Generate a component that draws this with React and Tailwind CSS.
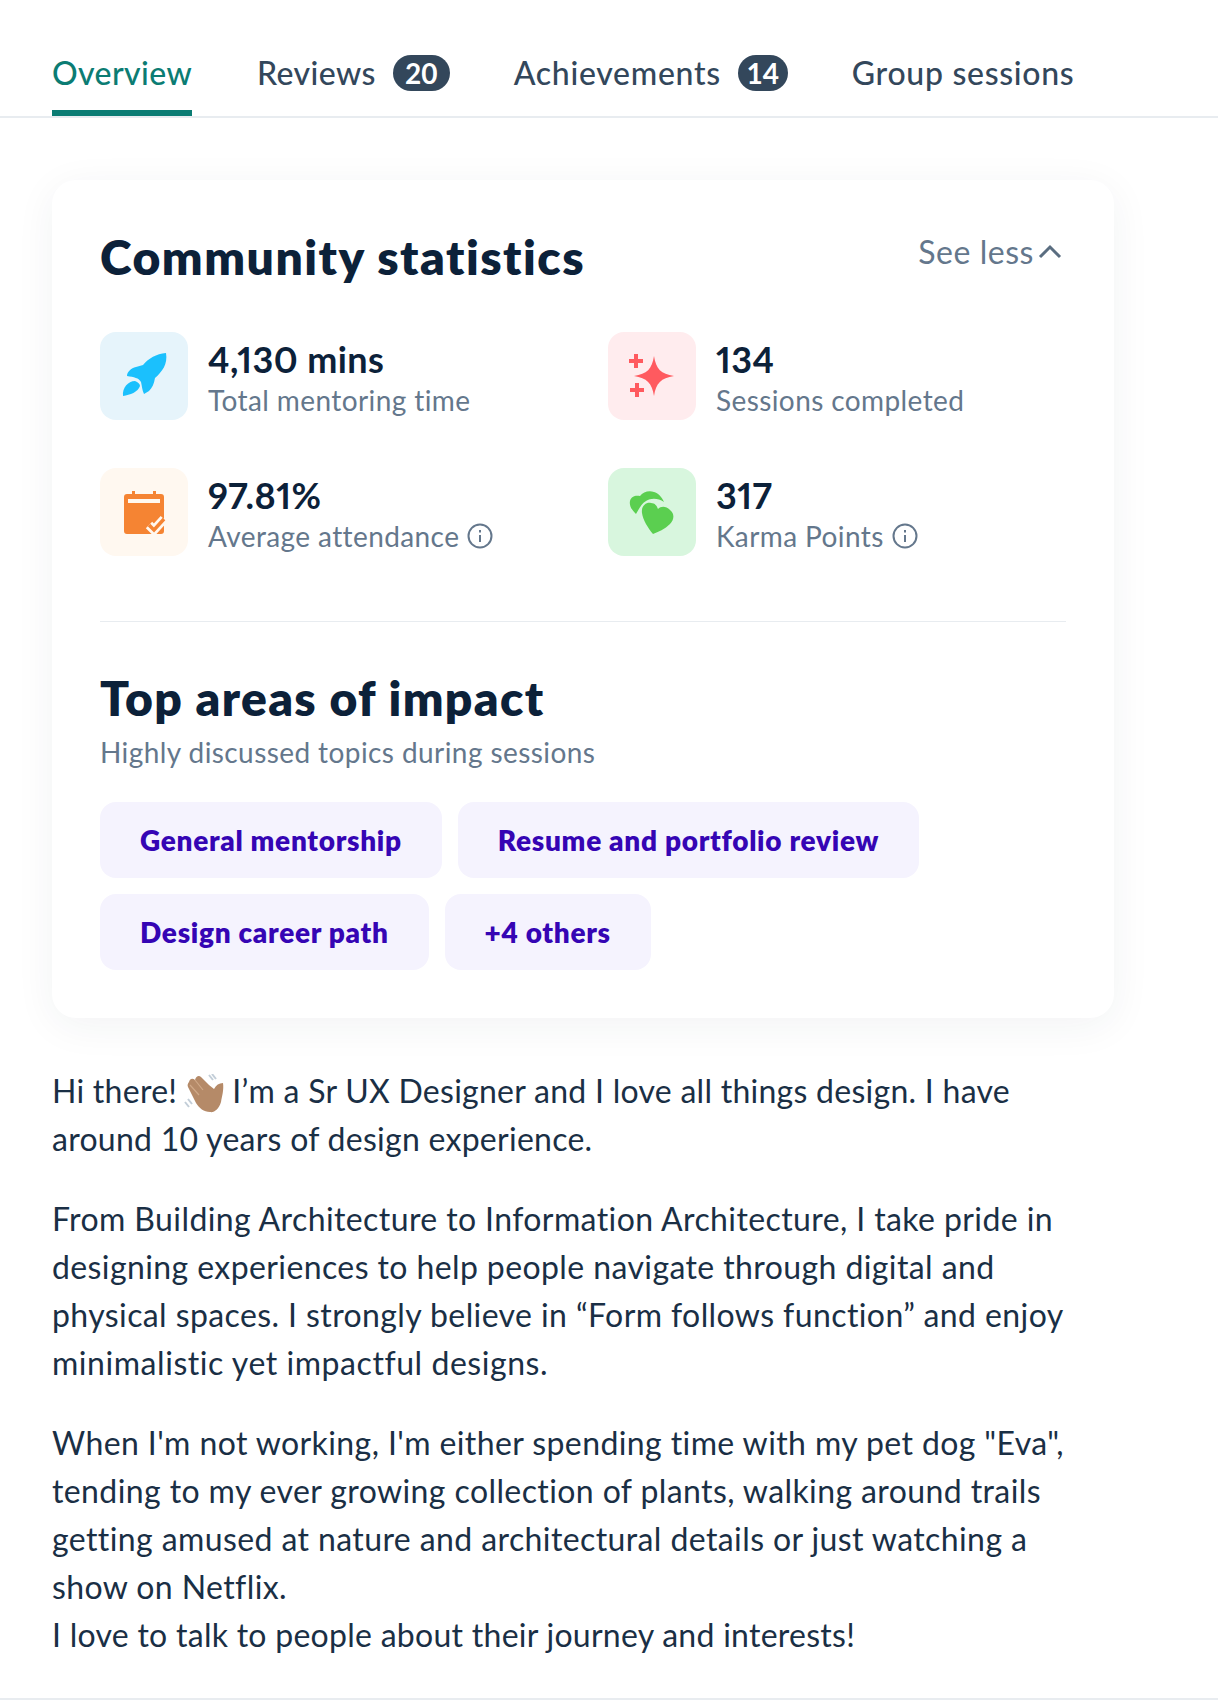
const stats = [
  { value: '4,130 mins', label: 'Total mentoring time', bg: 'bg-[#e6f4fb]', icon: 'rocket' },
  { value: '134', label: 'Sessions completed', bg: 'bg-[#ffecee]', icon: 'sparkle' },
  { value: '97.81%', label: 'Average attendance', bg: 'bg-[#fff8f0]', icon: 'calendar', info: true },
  { value: '317', label: 'Karma Points', bg: 'bg-[#d8f6de]', icon: 'hearts', info: true },
];

// icons are drawn in the coordinates of their 88px box
function StatIcon({ name }) {
  if (name === 'rocket') {
    return (
      <svg width="88" height="88" viewBox="0 0 88 88" fill="#1bc0fd">
        <path d="M66 21C68 32 62 40 55 46C54 52 52 56 49 59L44 62C42 58 42 54 41 50C39 46 34 45 27 44C27 40 31 36 36 35L43 33C49 26 56 22 66 21Z" />
        <path d="M23 64C22 56 28 49 35 49C38 50 40 52 40 54C38 60 30 63 23 64Z" />
      </svg>
    );
  }
  if (name === 'sparkle') {
    return (
      <svg width="88" height="88" viewBox="0 0 88 88" fill="#ff5a5f">
        <path d="M46 24C48 37 53 42 66 44C53 46 48 51 46 64C44 51 39 46 26 44C39 42 44 37 46 24Z" />
        <path d="M26 22h4v5h5v4h-5v5h-4v-5h-5v-4h5zM27 51h4v5h5v4h-5v5h-4v-5h-5v-4h5z" />
      </svg>
    );
  }
  if (name === 'calendar') {
    return (
      <svg width="88" height="88" viewBox="0 0 88 88">
        <path fill="#f58433" d="M32 23h3v3h18v-3h3v3h5c2 0 3 1 3 3v34c0 2-1 3-3 3H27c-2 0-3-1-3-3V29c0-2 1-3 3-3h5z" />
        <rect x="28" y="31" width="32" height="4" fill="#fff8f0" />
        <path d="M49 57l5 5 10-11" fill="none" stroke="#fff8f0" strokeWidth="9" />
        <path d="M49 57l5 5 10-11" fill="none" stroke="#f58433" strokeWidth="3.5" />
      </svg>
    );
  }
  return (
    <svg width="88" height="88" viewBox="0 0 88 88" fill="#5bcf50">
      <path d="M28 46C24 42 21 38 22 33C23 28 28 27 32 28C35 24 41 22 46 24C50 25 54 29 56 34C50 30 43 30 38 33C33 36 31 41 28 46Z" />
      <path d="M45 66C40 60 35 52 34 45C33 38 38 34 43 35C47 35 49 38 50 41C53 38 58 38 62 42C67 46 66 52 62 56C57 61 50 64 45 66Z" />
    </svg>
  );
}

function InfoIcon() {
  return (
    <svg width="26" height="26" viewBox="0 0 26 26" fill="none" stroke="#64778c" strokeWidth="2" className="shrink-0">
      <circle cx="13" cy="13" r="11.5" />
      <path d="M13 12v7" />
      <path d="M13 7v2.4" />
    </svg>
  );
}

function WaveEmoji() {
  return (
    <svg width="42" height="40" viewBox="0 0 42 40" className="inline-block align-[-11px] mx-[-2px]">
      <path d="M1 28l4 5M4 25l4 5M25 1l4 5M28 0l4 5" stroke="#c3ced8" strokeWidth="2" fill="none" />
      <path fill="#b58a68" d="M5 8C6 4 9 4 11 6C12 2 15 1 17 3L25 11L30 15C32 11 35 9 39 9C40 16 38 22 37 28C35 35 30 39 26 38C20 38 15 34 12 29L4 13C3 11 4 9 5 8Z" />
      <path d="M11 6l8 10M6 11l9 10" stroke="#d0a988" strokeWidth="1.2" fill="none" />
    </svg>
  );
}

export default function App() {
  return (
    <div className="w-[1218px] h-[1706px] bg-white font-['Lato','Liberation_Sans',sans-serif] text-[#1a2f45]">
      <div className="pt-[49px] border-b-2 border-[#e8ecf0] h-[118px] pl-[52px] flex gap-[64px] text-[32px] tracking-[0.4px] text-[#33475b] font-medium">
        <div className="h-[67px] border-b-[6px] border-[#0b7c73] text-[#0b7c73] leading-[48px] mr-px">Overview</div>
        <div className="flex gap-[17px] leading-[48px]">
          Reviews
          <span className="h-[36px] mt-[6px] w-[57px] rounded-full bg-[#33475b] text-white text-[28px] font-bold tracking-normal leading-[36px] text-center">20</span>
        </div>
        <div className="flex gap-[17px] leading-[48px] tracking-[0.7px]">
          Achievements
          <span className="h-[36px] mt-[6px] w-[50px] rounded-full bg-[#33475b] text-white text-[28px] font-bold tracking-normal leading-[36px] text-center">14</span>
        </div>
        <div className="leading-[48px] tracking-[0.7px]">Group sessions</div>
      </div>

      <div className="mt-[62px] ml-[52px] w-[1062px] h-[838px] rounded-[24px] bg-white p-12 shadow-[0_8px_40px_rgba(30,50,70,0.06)]">
        <div className="flex justify-between items-start h-[56px]">
          <h2 className="text-[48px] leading-[56px] font-extrabold tracking-[1.5px] text-[#0c2139] pt-px">Community statistics</h2>
          <div className="flex items-center gap-1 text-[32px] tracking-[0.55px] leading-[40px] text-[#64778c] mr-[4px] mt-[4px]">
            See less
            <svg width="24" height="24" viewBox="0 0 24 24" fill="none" stroke="#5a6d80" strokeWidth="3"><path d="M2 17L12 7l10 10" /></svg>
          </div>
        </div>

        <div className="mt-12 grid grid-cols-[508px_1fr] gap-y-12">
          {stats.map((s) => (
            <div key={s.label} className="flex gap-5 h-[88px]">
              <div className={`w-[88px] h-[88px] rounded-2xl flex items-center justify-center ${s.bg}`}>
                <StatIcon name={s.icon} />
              </div>
              <div className="pt-[5px]">
                <div className="text-[36px] leading-[44px] font-bold tracking-[0.4px] proportional-nums text-[#0c2139]">{s.value}</div>
                <div className="mt-px flex items-center gap-2 text-[28px] tracking-[0.4px] leading-[36px] text-[#64778c]">
                  {s.label}
                  {s.info && <InfoIcon />}
                </div>
              </div>
            </div>
          ))}
        </div>

        <div className="mt-[65px] border-t border-[#e8ecf0] pt-12">
          <h2 className="text-[48px] leading-[56px] font-extrabold tracking-[1.35px] text-[#0c2139]">Top areas of impact</h2>
          <p className="mt-[6px] text-[28px] tracking-[0.42px] leading-[40px] text-[#64778c]">Highly discussed topics during sessions</p>
          <div className="mt-[30px] flex flex-wrap gap-4 w-[900px]">
            {['General mentorship', 'Resume and portfolio review', 'Design career path', '+4 others'].map((c) => (
              <span key={c} className="h-[76px] px-10 rounded-2xl bg-[#f5f3fe] text-[#3505b4] text-[28px] font-extrabold tracking-[0.7px] leading-[76px]">{c}</span>
            ))}
          </div>
        </div>
      </div>

      <div className="mt-[49px] mx-[52px] w-[1080px] text-[32px] tracking-[0.4px] leading-[48px] text-[#1a2f45] flex flex-col gap-8">
        <p className="tracking-[0.27px]">Hi there! <WaveEmoji /> I’m a Sr UX Designer and I love all things design. I have<br />around 10 years of design experience.</p>
        <p>From Building Architecture to Information Architecture, I take pride in<br />designing experiences to help people navigate through digital and<br />physical spaces. I strongly believe in “Form follows function” and enjoy<br /><span className="tracking-[0.55px]">minimalistic yet impactful designs.</span></p>
        <p>When I'm not working, I'm either spending time with my pet dog "Eva",<br />tending to my ever growing collection of plants, walking around trails<br />getting amused at nature and architectural details or just watching a<br />show on Netflix.<br /><span className="tracking-[0.27px]">I love to talk to people about their journey and interests!</span></p>
      </div>
      <div className="mt-[39px] border-b-2 border-[#e8ecf0]" />
    </div>
  );
}
